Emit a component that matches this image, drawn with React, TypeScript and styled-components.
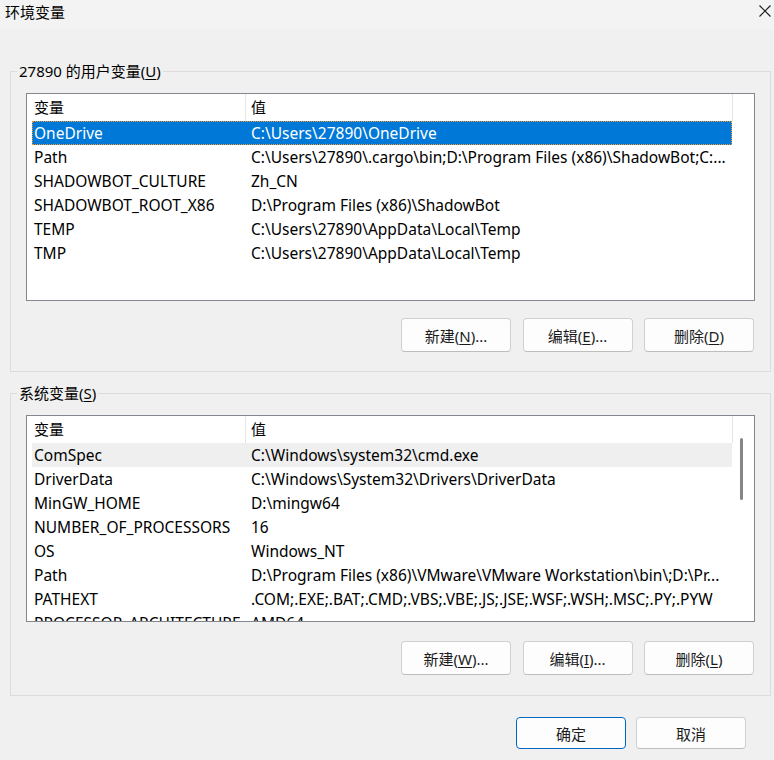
import React from "react";
import styled, { createGlobalStyle } from "styled-components";

const GlobalStyle = createGlobalStyle`
    html, body {
        margin: 0;
        padding: 0;
        background: #f0f0f0;
    }
    body {
        font-family: "Noto Sans", "Noto Sans CJK SC", sans-serif;
        font-size: 15px;
        color: #000;
    }
`;

const Window = styled.div`
    width: 774px;
    height: 760px;
    background: #f0f0f0;
    display: flex;
    flex-direction: column;
    overflow: hidden;
`;

const TitleBar = styled.header`
    height: 29px;
    flex: none;
    background: #f3f3f3;
    display: flex;
    align-items: flex-start;
    justify-content: space-between;
    padding: 0 3px 0 5px;
    box-sizing: border-box;
`;

const Title = styled.span`
    line-height: 24px;
`;

const CloseButton = styled.button`
    background: transparent;
    border: none;
    padding: 0;
    margin-top: 5px;
    width: 12px;
    height: 12px;
    display: flex;
    cursor: pointer;
`;

const Body = styled.main`
    padding: 32px 3px 0 10px;
    display: flex;
    flex-direction: column;
    gap: 11px;
`;

const GroupBox = styled.fieldset<{ $pad: number }>`
    margin: 0;
    min-width: 0;
    border: 1px solid #dcdcdc;
    padding: 12px 15px ${(p) => p.$pad}px 15px;
    display: flex;
    flex-direction: column;
`;

const GroupLabel = styled.legend`
    padding: 0 2px;
    margin-left: -9px;
    line-height: 20px;
`;

const Key = styled.u`
    text-decoration-thickness: 1px;
    text-underline-offset: 2px;
`;

const ListBox = styled.div<{ $height: number }>`
    height: ${(p) => p.$height}px;
    box-sizing: border-box;
    border: 1px solid #828790;
    background: #fff;
    display: flex;
    overflow: hidden;
    font-size: 15.5px;
`;

const ListContent = styled.div`
    width: 705px;
    flex: none;
    display: flex;
    flex-direction: column;
`;

const HeaderRow = styled.div`
    display: grid;
    grid-template-columns: 219px 487px;
    height: 27px;
    flex: none;
    font-size: 15px;
`;

const HeaderCell = styled.div<{ $pad: number }>`
    padding-left: ${(p) => p.$pad}px;
    border-right: 1px solid #e5e5e5;
    line-height: 27px;
    white-space: nowrap;
`;

const Row = styled.div<{ $state?: "selected" | "hover" }>`
    margin-left: 5px;
    width: 700px;
    height: 24px;
    flex: none;
    display: grid;
    grid-template-columns: 213px 487px;
    line-height: 24px;
    box-sizing: border-box;
    background: ${(p) =>
        p.$state === "selected" ? "#0078d7" : p.$state === "hover" ? "#efefef" : "transparent"};
    color: ${(p) => (p.$state === "selected" ? "#fff" : "#000")};
    outline: ${(p) => (p.$state === "selected" ? "1px dotted #f29a2e" : "none")};
    outline-offset: -1px;
`;

const Cell = styled.div<{ $pad: number }>`
    padding-left: ${(p) => p.$pad}px;
    white-space: nowrap;
    overflow: hidden;
    text-overflow: ellipsis;
`;

const ScrollTrack = styled.div`
    flex: 1;
    display: flex;
    justify-content: center;
    padding-top: 22px;
`;

const ScrollThumb = styled.div`
    width: 3px;
    height: 62px;
    margin-left: -3px;
    border-radius: 2px;
    background: #868686;
`;

const ButtonRow = styled.div<{ $top: number }>`
    margin-top: ${(p) => p.$top}px;
    margin-right: 1px;
    display: flex;
    justify-content: flex-end;
    gap: 11.5px;
`;

const Button = styled.button<{ $primary?: boolean; $height?: number }>`
    width: 110px;
    height: ${(p) => p.$height ?? 34}px;
    box-sizing: border-box;
    border-radius: 4px;
    border: 1px solid ${(p) => (p.$primary ? "#0067c0" : "#d0d0d0")};
    border-bottom-color: ${(p) => (p.$primary ? "#0067c0" : "#bdbdbd")};
    background: #fdfdfd;
    font: inherit;
    color: #1b1b1b;
    padding: 0;
    cursor: pointer;
`;

const Footer = styled.footer`
    display: flex;
    justify-content: flex-end;
    gap: 10px;
    padding: 21px 28px 0 0;
`;

type Variable = { name: string; value: string; state?: "selected" | "hover" };

const userVars: Variable[] = [
    { name: "OneDrive", value: "C:\\Users\\27890\\OneDrive", state: "selected" },
    { name: "Path", value: "C:\\Users\\27890\\.cargo\\bin;D:\\Program Files (x86)\\ShadowBot;C:..." },
    { name: "SHADOWBOT_CULTURE", value: "Zh_CN" },
    { name: "SHADOWBOT_ROOT_X86", value: "D:\\Program Files (x86)\\ShadowBot" },
    { name: "TEMP", value: "C:\\Users\\27890\\AppData\\Local\\Temp" },
    { name: "TMP", value: "C:\\Users\\27890\\AppData\\Local\\Temp" },
];

const systemVars: Variable[] = [
    { name: "ComSpec", value: "C:\\Windows\\system32\\cmd.exe", state: "hover" },
    { name: "DriverData", value: "C:\\Windows\\System32\\Drivers\\DriverData" },
    { name: "MinGW_HOME", value: "D:\\mingw64" },
    { name: "NUMBER_OF_PROCESSORS", value: "16" },
    { name: "OS", value: "Windows_NT" },
    { name: "Path", value: "D:\\Program Files (x86)\\VMware\\VMware Workstation\\bin\\;D:\\Pr..." },
    { name: "PATHEXT", value: ".COM;.EXE;.BAT;.CMD;.VBS;.VBE;.JS;.JSE;.WSF;.WSH;.MSC;.PY;.PYW" },
    { name: "PROCESSOR_ARCHITECTURE", value: "AMD64" },
];

const CloseIcon = () => (
    <svg width="12" height="12" viewBox="0 0 12 12">
        <path d="M0.5 0.5 L11.5 11.5 M11.5 0.5 L0.5 11.5" stroke="#1a1a1a" strokeWidth="1.1" fill="none" />
    </svg>
);

interface VariableListProps {
    items: Variable[];
    height: number;
    scroll?: boolean;
}

const VariableList: React.FC<VariableListProps> = ({ items, height, scroll }) => (
    <ListBox $height={height}>
        <ListContent>
            <HeaderRow>
                <HeaderCell $pad={7}>变量</HeaderCell>
                <HeaderCell $pad={5}>值</HeaderCell>
            </HeaderRow>
            {items.map((v) => (
                <Row key={v.name} $state={v.state}>
                    <Cell $pad={2}>{v.name}</Cell>
                    <Cell $pad={6}>{v.value}</Cell>
                </Row>
            ))}
        </ListContent>
        <ScrollTrack>{scroll && <ScrollThumb />}</ScrollTrack>
    </ListBox>
);

const Actions: React.FC<{ keys: [string, string, string]; top: number }> = ({ keys, top }) => (
    <ButtonRow $top={top}>
        <Button>
            新建(<Key>{keys[0]}</Key>)...
        </Button>
        <Button>
            编辑(<Key>{keys[1]}</Key>)...
        </Button>
        <Button>
            删除(<Key>{keys[2]}</Key>)
        </Button>
    </ButtonRow>
);

export default function App() {
    return (
        <>
            <GlobalStyle />
            <Window>
                <TitleBar>
                    <Title>环境变量</Title>
                    <CloseButton aria-label="关闭">
                        <CloseIcon />
                    </CloseButton>
                </TitleBar>
                <Body>
                    <GroupBox $pad={19}>
                        <GroupLabel>
                            27890 的用户变量(<Key>U</Key>)
                        </GroupLabel>
                        <VariableList items={userVars} height={208} />
                        <Actions keys={["N", "E", "D"]} top={17} />
                    </GroupBox>
                    <GroupBox $pad={20}>
                        <GroupLabel>
                            系统变量(<Key>S</Key>)
                        </GroupLabel>
                        <VariableList items={systemVars} height={207} scroll />
                        <Actions keys={["W", "I", "L"]} top={19} />
                    </GroupBox>
                </Body>
                <Footer>
                    <Button $primary $height={32}>
                        确定
                    </Button>
                    <Button $height={32}>取消</Button>
                </Footer>
            </Window>
        </>
    );
}
